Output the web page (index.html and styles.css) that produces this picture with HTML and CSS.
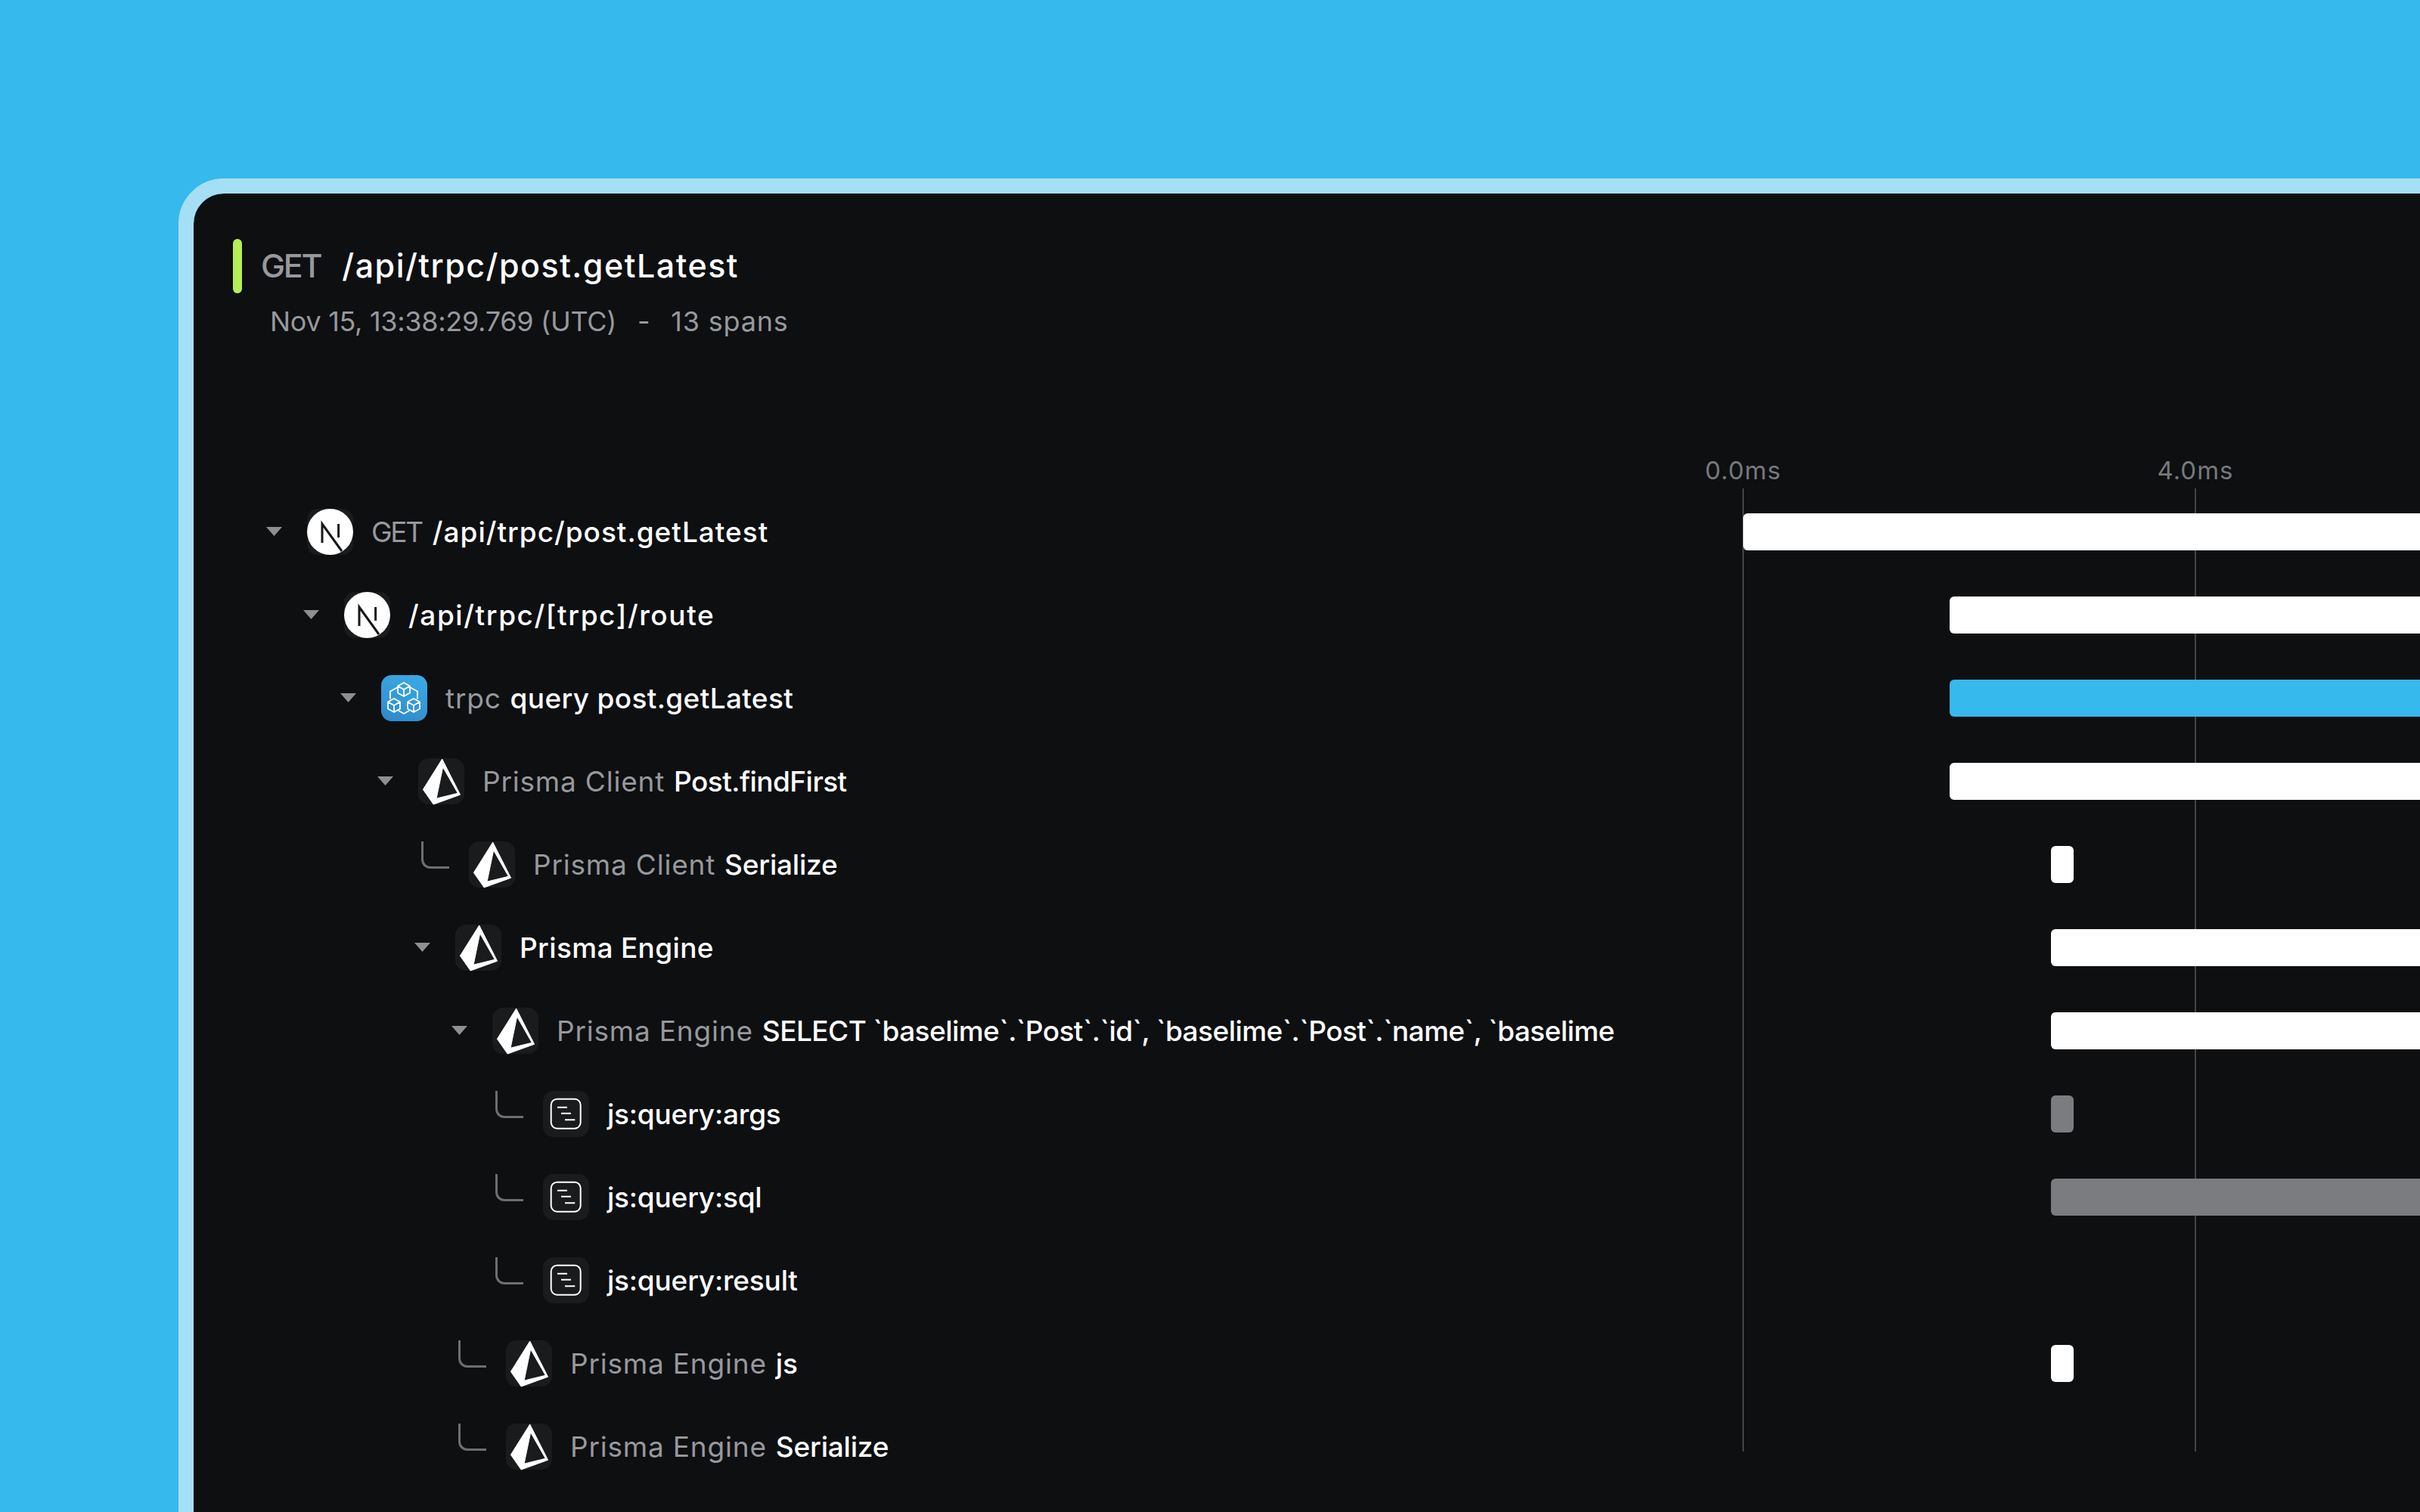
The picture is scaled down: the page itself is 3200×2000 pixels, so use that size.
FILE: index.html
```html
<!DOCTYPE html>
<html lang="en">
<head>
    <meta charset="UTF-8">
    <meta name="viewport" content="width=device-width, initial-scale=1.0">
    <title>Trace - GET /api/trpc/post.getLatest</title>
    <link rel="stylesheet" href="styles.css">
</head>
<body>
    <svg class="icon-defs" width="0" height="0" aria-hidden="true">
        <symbol id="icon-next" viewBox="0 0 61 61">
            <circle cx="30.5" cy="30.5" r="30.5" fill="#fff"/>
            <path d="M20 45V20L46 56" fill="none" stroke="#17181a" stroke-width="3"/>
            <path d="M41.6 20V38" fill="none" stroke="#17181a" stroke-width="3"/>
        </symbol>
        <symbol id="icon-trpc" viewBox="0 0 61 61">
            <g fill="none" stroke="#fff" stroke-width="1.8" stroke-linejoin="round">
                <path d="M30 10l8 4.5v9L30 28l-8-4.500v-9zM22 14.500l8 4.500 8-4.500M30 19v9"/>
                <path d="M17 31l8 4.500v9L17 49l-8-4.500v-9zM9 35.500l8 4.500 8-4.500M17 40v9"/>
                <path d="M43 31l8 4.500v9L43 49l-8-4.500v-9zM35 35.500l8 4.500 8-4.500M43 40v9"/>
                <path d="M38 16l10 5.500v10M22 16l-10 5.500v10M23 47l7 4 7-4"/>
            </g>
        </symbol>
        <symbol id="icon-prisma" viewBox="0 0 61 62" overflow="visible">
            <path fill="#fff" fill-rule="evenodd" stroke="#fff" stroke-width="1" stroke-linejoin="round" d="M31.700 1L6 42l14 20 36-13zM32.700 12L24 54l28.700-7z"/>
        </symbol>
        <symbol id="icon-doc" viewBox="0 0 61 61">
            <rect x="10.700" y="10.700" width="39" height="39" rx="8" fill="none" stroke="#fff" stroke-width="2"/>
            <path d="M19 21.700h13M24 29.700h13M29 38.300h13.300" fill="none" stroke="#fff" stroke-width="2"/>
        </symbol>
        <symbol id="icon-caret" viewBox="0 0 21 12">
            <path d="M0 0h21L10.500 12z" fill="#8f8f92"/>
        </symbol>
    </svg>

    <main class="panel">
        <header class="trace-head">
            <div class="trace-title">
                <span class="accent"></span>
                <span class="method">GET</span>
                <span class="path">/api/trpc/post.getLatest</span>
            </div>
            <p class="trace-meta">Nov 15, 13:38:29.769 (UTC)<span class="sep">-</span><span class="count">13 spans</span></p>
        </header>

        <section class="waterfall">
            <div class="axis">
                <span class="tick tick-0">0.0ms</span>
                <span class="tick tick-4">4.0ms</span>
            </div>
            <span class="gridline gridline-0"></span>
            <span class="gridline gridline-4"></span>

            <div class="rows">
                <div class="row">
                    <div class="label" style="padding-left: 0px">
                        <span class="lead"><svg class="caret"><use href="#icon-caret"/></svg></span>
                        <span class="badge"><svg><use href="#icon-next"/></svg></span>
                        <span class="dim dim-method">GET</span><span class="name name-path">/api/trpc/post.getLatest</span>
                    </div>
                    <div class="track"><div class="bar" style="margin-left: 0px"></div></div>
                </div>
                <div class="row">
                    <div class="label" style="padding-left: 49px">
                        <span class="lead"><svg class="caret"><use href="#icon-caret"/></svg></span>
                        <span class="badge"><svg><use href="#icon-next"/></svg></span>
                        <span class="name name-route">/api/trpc/[trpc]/route</span>
                    </div>
                    <div class="track"><div class="bar" style="margin-left: 273px"></div></div>
                </div>
                <div class="row">
                    <div class="label" style="padding-left: 98px">
                        <span class="lead"><svg class="caret"><use href="#icon-caret"/></svg></span>
                        <span class="badge badge-trpc"><svg><use href="#icon-trpc"/></svg></span>
                        <span class="dim">trpc</span><span class="name name-query">query post.getLatest</span>
                    </div>
                    <div class="track"><div class="bar bar-blue" style="margin-left: 273px"></div></div>
                </div>
                <div class="row">
                    <div class="label" style="padding-left: 147px">
                        <span class="lead"><svg class="caret"><use href="#icon-caret"/></svg></span>
                        <span class="badge"><svg><use href="#icon-prisma"/></svg></span>
                        <span class="dim">Prisma Client</span><span class="name name-tight">Post.findFirst</span>
                    </div>
                    <div class="track"><div class="bar" style="margin-left: 273px"></div></div>
                </div>
                <div class="row">
                    <div class="label" style="padding-left: 196px">
                        <span class="lead lead-leaf"><span class="elbow"></span></span>
                        <span class="badge"><svg><use href="#icon-prisma"/></svg></span>
                        <span class="dim">Prisma Client</span><span class="name">Serialize</span>
                    </div>
                    <div class="track"><div class="bar bar-short" style="margin-left: 407px"></div></div>
                </div>
                <div class="row">
                    <div class="label" style="padding-left: 196px">
                        <span class="lead"><svg class="caret"><use href="#icon-caret"/></svg></span>
                        <span class="badge"><svg><use href="#icon-prisma"/></svg></span>
                        <span class="name name-query">Prisma Engine</span>
                    </div>
                    <div class="track"><div class="bar" style="margin-left: 407px"></div></div>
                </div>
                <div class="row">
                    <div class="label" style="padding-left: 245px">
                        <span class="lead"><svg class="caret"><use href="#icon-caret"/></svg></span>
                        <span class="badge"><svg><use href="#icon-prisma"/></svg></span>
                        <span class="dim">Prisma Engine</span><span class="name name-tight">SELECT `baselime`.`Post`.`id`, `baselime`.`Post`.`name`, `baselime</span>
                    </div>
                    <div class="track"><div class="bar" style="margin-left: 407px"></div></div>
                </div>
                <div class="row">
                    <div class="label" style="padding-left: 294px">
                        <span class="lead lead-leaf"><span class="elbow"></span></span>
                        <span class="badge"><svg><use href="#icon-doc"/></svg></span>
                        <span class="name">js:query:args</span>
                    </div>
                    <div class="track"><div class="bar bar-short bar-grey" style="margin-left: 407px"></div></div>
                </div>
                <div class="row">
                    <div class="label" style="padding-left: 294px">
                        <span class="lead lead-leaf"><span class="elbow"></span></span>
                        <span class="badge"><svg><use href="#icon-doc"/></svg></span>
                        <span class="name">js:query:sql</span>
                    </div>
                    <div class="track"><div class="bar bar-grey" style="margin-left: 407px"></div></div>
                </div>
                <div class="row">
                    <div class="label" style="padding-left: 294px">
                        <span class="lead lead-leaf"><span class="elbow"></span></span>
                        <span class="badge"><svg><use href="#icon-doc"/></svg></span>
                        <span class="name">js:query:result</span>
                    </div>
                    <div class="track"></div>
                </div>
                <div class="row">
                    <div class="label" style="padding-left: 245px">
                        <span class="lead lead-leaf"><span class="elbow"></span></span>
                        <span class="badge"><svg><use href="#icon-prisma"/></svg></span>
                        <span class="dim">Prisma Engine</span><span class="name">js</span>
                    </div>
                    <div class="track"><div class="bar bar-short" style="margin-left: 407px"></div></div>
                </div>
                <div class="row">
                    <div class="label" style="padding-left: 245px">
                        <span class="lead lead-leaf"><span class="elbow"></span></span>
                        <span class="badge"><svg><use href="#icon-prisma"/></svg></span>
                        <span class="dim">Prisma Engine</span><span class="name">Serialize</span>
                    </div>
                    <div class="track"></div>
                </div>
            </div>
        </section>
    </main>
</body>
</html>
```

FILE: styles.css
```css
* {
    margin: 0;
    padding: 0;
    box-sizing: border-box;
    font-family: Inter, 'Open Sans', sans-serif;
}

html, body {
    height: 100%;
    overflow: hidden;
}

body {
    background: #36b9ec;
    padding: 236px 0 0 236px;
}

.icon-defs {
    position: absolute;
}

.panel {
    width: 3200px;
    height: 1900px;
    background: #0d0f11;
    border: 20px solid #a5dff5;
    border-radius: 60px;
    padding: 60px 0 0 52px;
    background-clip: padding-box;
}

/* header */
.trace-title {
    display: flex;
    align-items: center;
    height: 72px;
    font-size: 43px;
    font-weight: 500;
    color: #fff;
}

.accent {
    width: 12px;
    height: 72px;
    border-radius: 6px;
    background: #b5ee57;
    margin-right: 25px;
}

.method {
    color: #98989c;
    margin: -3px 28px 0 0;
    letter-spacing: -2.300px;
}

.path {
    margin-top: -3px;
    letter-spacing: 1.500px;
}

.trace-meta {
    margin: 15px 0 0 49px;
    font-size: 36px;
    line-height: 44px;
    color: #98989c;
    letter-spacing: -0.3px;
}

.sep {
    margin: 0 28px;
}

.count {
    letter-spacing: 0.800px;
}

/* waterfall */
.waterfall {
    position: relative;
    margin: 153px 0 0 44px;
}

.axis {
    position: relative;
    height: 48px;
}

.tick {
    position: absolute;
    top: -2px;
    line-height: 48px;
    font-size: 33px;
    letter-spacing: 1px;
    color: #77787b;
    transform: translateX(-50%);
}

.tick-0 { left: 1953px; }
.tick-4 { left: 2551px; }

.gridline {
    position: absolute;
    top: 46px;
    height: 1274px;
    width: 2px;
    background: #434446;
}

.gridline-0 { left: 1952px; }
.gridline-4 { left: 2550px; }

.rows {
    position: relative;
    display: flex;
    flex-direction: column;
}

.row {
    display: flex;
    align-items: center;
    height: 110px;
}

.label {
    width: 1953px;
    flex-shrink: 0;
    display: flex;
    align-items: center;
    font-size: 37px;
    color: #fff;
    white-space: nowrap;
}

.lead {
    width: 54px;
    flex-shrink: 0;
    display: flex;
    align-items: center;
}

.lead-leaf {
    width: 72px;
    position: relative;
    height: 61px;
}

.caret {
    width: 21px;
    height: 12px;
}

.elbow {
    position: absolute;
    left: 9px;
    top: 0;
    width: 37px;
    height: 36px;
    border-left: 3px solid #6e6e70;
    border-bottom: 3px solid #6e6e70;
    border-bottom-left-radius: 12px;
}

.badge {
    width: 61px;
    height: 61px;
    flex-shrink: 0;
    border-radius: 14px;
    background: #1a1b1d;
    margin-right: 24px;
}

.badge svg {
    display: block;
    width: 61px;
    height: 61px;
    overflow: visible;
}

.badge-trpc {
    background: linear-gradient(200deg, #3bace8, #2f88c9);
}

.dim {
    color: #98989c;
    margin-right: 12px;
    letter-spacing: 0.800px;
}

.dim-method {
    margin-right: 14px;
    letter-spacing: -2.300px;
}

.name {
    font-weight: 500;
    letter-spacing: -0.200px;
}

.name-path {
    letter-spacing: 1px;
}

.name-route {
    letter-spacing: 1.600px;
}

.name-query {
    letter-spacing: 0.350px;
}

.name-tight {
    letter-spacing: -0.550px;
}

.track {
    flex: 1;
}

.bar {
    width: 2000px;
    height: 49px;
    border-radius: 6px;
    background: #fff;
}

.bar-blue {
    background: #36b9ec;
}

.bar-grey {
    background: #7b7c7f;
}

.bar-short {
    width: 30px;
}
```
